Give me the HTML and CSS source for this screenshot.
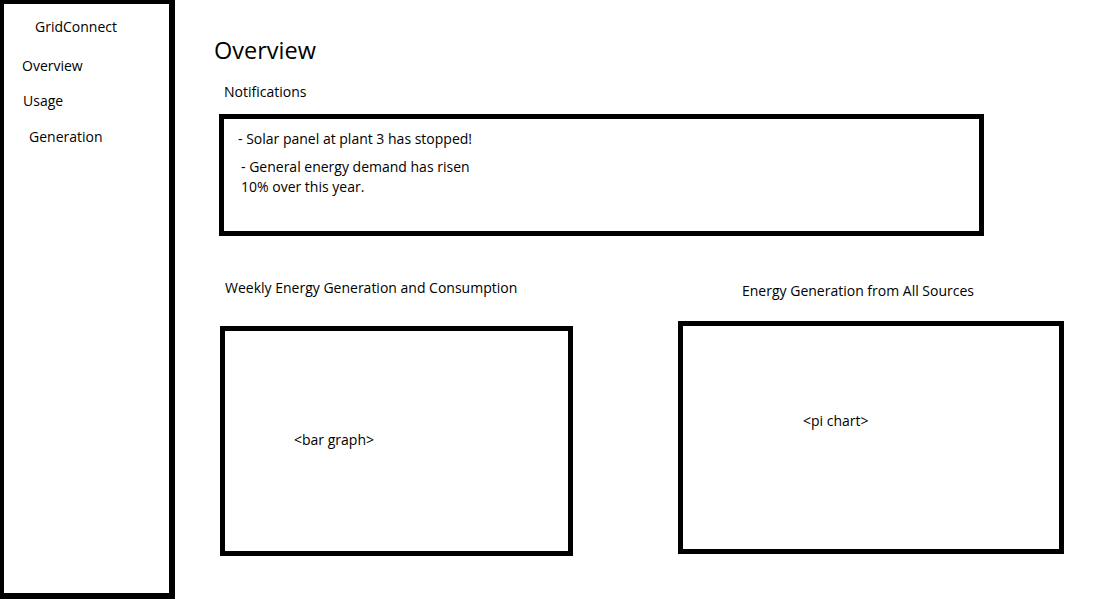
FILE: index.html
```html
<!DOCTYPE html>
<html>
<head>
<meta charset="utf-8">
<link rel="stylesheet" href="styles.css">
</head>
<body>
<div class="app">
  <nav class="sidebar">
    <div class="brand">GridConnect</div>
    <div class="nav-item nav-overview">Overview</div>
    <div class="nav-item nav-usage">Usage</div>
    <div class="nav-item nav-generation">Generation</div>
  </nav>
  <main class="main">
    <h1 class="title">Overview</h1>
    <div class="section-label notif-label">Notifications</div>
    <div class="notif-box">
      <p class="notif notif-1">- Solar panel at plant 3 has stopped!</p>
      <p class="notif notif-2">- General energy demand has risen<br>10% over this year.</p>
    </div>
    <div class="charts">
      <section class="chart chart-bar">
        <div class="chart-label">Weekly Energy Generation and Consumption</div>
        <div class="chart-box"><span class="placeholder">&lt;bar graph&gt;</span></div>
      </section>
      <section class="chart chart-pie">
        <div class="chart-label">Energy Generation from All Sources</div>
        <div class="chart-box"><span class="placeholder">&lt;pi chart&gt;</span></div>
      </section>
    </div>
  </main>
</div>
</body>
</html>
```

FILE: styles.css
```css
* { box-sizing: border-box; }
html, body { margin: 0; padding: 0; background: #fff; }
body {
  font-family: "Open Sans", "Noto Sans", sans-serif;
  font-size: 14px;
  line-height: 20px;
  color: #000;
  width: 1112px;
  height: 599px;
  overflow: hidden;
}
.app { display: flex; height: 599px; }

.sidebar {
  width: 175px;
  height: 599px;
  flex: none;
  border-style: solid;
  border-color: #000;
  border-width: 4px 6px 6px 4px;
  padding-top: 13px;
}
.brand { padding-left: 31px; }
.nav-item { margin-top: 19px; }
.nav-overview { padding-left: 18px; }
.nav-usage { padding-left: 19px; margin-top: 15px; }
.nav-generation { padding-left: 25px; margin-top: 16px; }

.main { flex: 1; padding-left: 39px; }
.title {
  margin: 35px 0 0 0;
  font-size: 23.5px;
  line-height: 30px;
  font-weight: normal;
}
.notif-label { margin: 17px 0 0 10px; }
.notif-box {
  margin: 12px 0 0 5px;
  width: 765px;
  height: 122px;
  border: 5px solid #000;
  padding: 10px 0 0 14px;
}
.notif { margin: 0; }
.notif-2 { margin-top: 8px; padding-left: 3px; }

.charts { display: flex; align-items: flex-start; margin-top: 42px; margin-left: 6px; }
.chart-label { line-height: 20px; }
.chart-bar .chart-label { padding-left: 5px; }
.chart-bar .chart-box {
  margin-top: 28px;
  width: 353px;
  height: 230px;
  padding: 99px 0 0 69px;
}
.chart-pie { margin-left: 105px; margin-top: 3px; }
.chart-pie .chart-label { padding-left: 64px; }
.chart-pie .chart-box {
  margin-top: 20px;
  width: 386px;
  height: 233px;
  padding: 85px 0 0 120px;
}
.chart-box { border: 5px solid #000; }
.placeholder { display: block; }
```
